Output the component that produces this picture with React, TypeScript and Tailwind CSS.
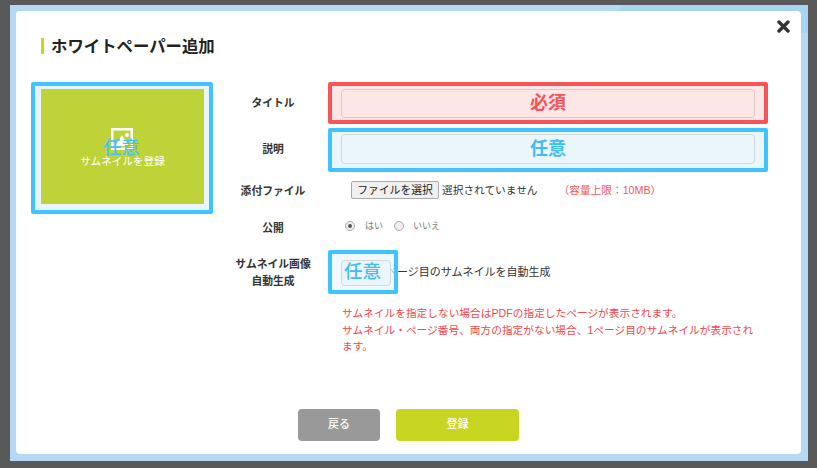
import React from 'react';

const jp = "font-['Liberation_Sans','Noto_Sans_CJK_JP',sans-serif]";

const Label: React.FC<{ className?: string; children: React.ReactNode }> = ({ className = '', children }) => (
  <div className={`w-[110px] shrink-0 text-center text-[10.8px] leading-[17px] font-bold text-[#333] ${className}`}>{children}</div>
);

const Row: React.FC<{ className: string; children: React.ReactNode }> = ({ className, children }) => (
  <div className={`flex items-center ${className}`}>{children}</div>
);

export default function App() {
  return (
    <div className={`h-[468px] w-[817px] overflow-hidden bg-[#595959] pt-[5px] pr-[9px] pb-[7px] pl-[10px] ${jp}`}>
      <div className="relative h-full bg-[#b5d9f5] pt-[6px] pr-[7px] pb-[7px] pl-[6px]">
        <div className="absolute top-0 right-0 h-[28px] w-[188px] bg-[#a6d2f3]" />
        <div className="relative flex h-full flex-col rounded-[4px] bg-white pt-[29px] pl-[15px]">
          <svg className="absolute top-[9px] right-[11px]" width="13" height="13" viewBox="0 0 13 13" aria-hidden="true">
            <path d="M2 2l9 9M11 2l-9 9" stroke="#333" strokeWidth="3.4" strokeLinecap="round" />
          </svg>

          <h1 className="flex h-[12px] items-center gap-[7px] pl-[10px] text-[16.4px] font-bold text-[#222]">
            <span className="h-[16px] w-[3px] bg-[#c8d621]" />
            ホワイトペーパー追加
          </h1>

          <div className="mt-[30px] flex items-start">
            <div className="flex h-[132px] w-[182px] shrink-0 rounded-[2px] border-[4px] border-[#40c4ff] bg-[#e9f5fa] pt-[3px] pr-[5px] pb-[6px] pl-[6px]">
              <div className="relative flex flex-1 flex-col items-center bg-[#bed337] pt-[39px] text-white">
                <svg className="-ml-[2px]" width="22" height="22" viewBox="0 0 22 22" aria-hidden="true">
                  <path fill="#fff" fillRule="evenodd" d="M0 0h22v22H0zM2.5 2.5v17h17v-17z" />
                  <circle cx="16" cy="7" r="2" fill="#fff" />
                  <path fill="#fff" d="M4 18l7-11 7 11z" />
                </svg>
                <span className="mt-[3px] text-[10.6px] leading-[16px]">サムネイルを登録</span>
                <span className="absolute top-[47px] -ml-[2px] text-[18px] leading-[24px] font-medium text-[#40c4ff]">任意</span>
              </div>
            </div>

            <div className="ml-[5px] flex w-[550px] flex-col">
              <Row className="h-[42px]">
                <Label>タイトル</Label>
                <div className="flex h-[42px] w-[440px] rounded-[2px] border-[4px] border-[#f7545a] bg-[#fde6e6] pt-[3px] pr-[9px] pb-[2px] pl-[9px]">
                  <div className="flex flex-1 items-center justify-center rounded-[4px] border border-[#dacaca] text-[18px] font-bold text-[#f7545a]">必須</div>
                </div>
              </Row>
              <Row className="mt-[4px] h-[44px]">
                <Label className="pb-[2px]">説明</Label>
                <div className="flex h-[44px] w-[440px] rounded-[2px] border-[4px] border-[#40c4ff] bg-[#eaf6fc] pt-[2px] pr-[9px] pb-[4px] pl-[9px]">
                  <div className="flex flex-1 items-center justify-center rounded-[4px] border border-[#cfd8dc] text-[18px] font-bold text-[#40bdf5]">任意</div>
                </div>
              </Row>
              <Row className="h-[36px]">
                <Label className="pt-[2px]">添付ファイル</Label>
                <div className="flex items-center pl-[23px]">
                  <button className="h-[18px] w-[88px] rounded-[2px] border border-[#aaa] bg-[#f0f0f0] text-[10.8px] leading-[16px] text-[#222]">ファイルを選択</button>
                  <span className="ml-[3px] text-[10.7px] text-[#333]">選択されていません</span>
                  <span className="ml-[21px] text-[10.7px] text-[#f7545a]">（容量上限：10MB）</span>
                </div>
              </Row>
              <Row className="h-[40px]">
                <Label>公開</Label>
                <div className="flex items-center pl-[17px] pb-[2px] text-[9px] text-[#777]">
                  <span className="mb-[2px] flex h-[10px] w-[10px] items-center justify-center rounded-full border border-[#aaa] bg-[#eee]">
                    <span className="h-[4px] w-[4px] rounded-full bg-[#555]" />
                  </span>
                  <span className="ml-[10px]">はい</span>
                  <span className="mb-[2px] ml-[11px] h-[10px] w-[10px] rounded-full border border-[#aaa] bg-[#eee]" />
                  <span className="ml-[9px]">いいえ</span>
                </div>
              </Row>
              <Row className="mt-[2px] h-[44px]">
                <Label className="pt-[2px]">
                  サムネイル画像
                  <br />
                  自動生成
                </Label>
                <div className="relative z-10 flex h-[44px] w-[70px] shrink-0 rounded-[2px] border-[4px] border-[#40c4ff] bg-[#eaf6fc]/70 pt-[6px] pr-[3px] pb-[4px] pl-[9px]">
                  <div className="flex flex-1 items-center rounded-[4px] border border-[#cfd8dc] bg-[#eaf6fc] pb-[3px] pl-[2px] text-[18.5px] leading-[18px] font-medium text-[#40bdf5]">任意</div>
                </div>
                <span className="-ml-[12px] text-[11px] text-[#333]">ページ目のサムネイルを自動生成</span>
              </Row>
              <p className="mt-[11px] ml-[124px] w-[414px] text-[10.7px] leading-[16.5px] text-[#f7454a]">
                サムネイルを指定しない場合はPDFの指定したページが表示されます。
                <br />
                サムネイル・ページ番号、両方の指定がない場合、1ページ目のサムネイルが表示されます。
              </p>
            </div>
          </div>

          <div className="mt-[54px] flex justify-center gap-[16px] pr-[15px]">
            <button className="h-[32px] w-[82px] rounded-[4px] bg-[#999] text-[11px] font-medium text-white">戻る</button>
            <button className="h-[32px] w-[123px] rounded-[4px] bg-[#c8d621] text-[11px] font-medium text-white">登録</button>
          </div>
        </div>
      </div>
    </div>
  );
}
